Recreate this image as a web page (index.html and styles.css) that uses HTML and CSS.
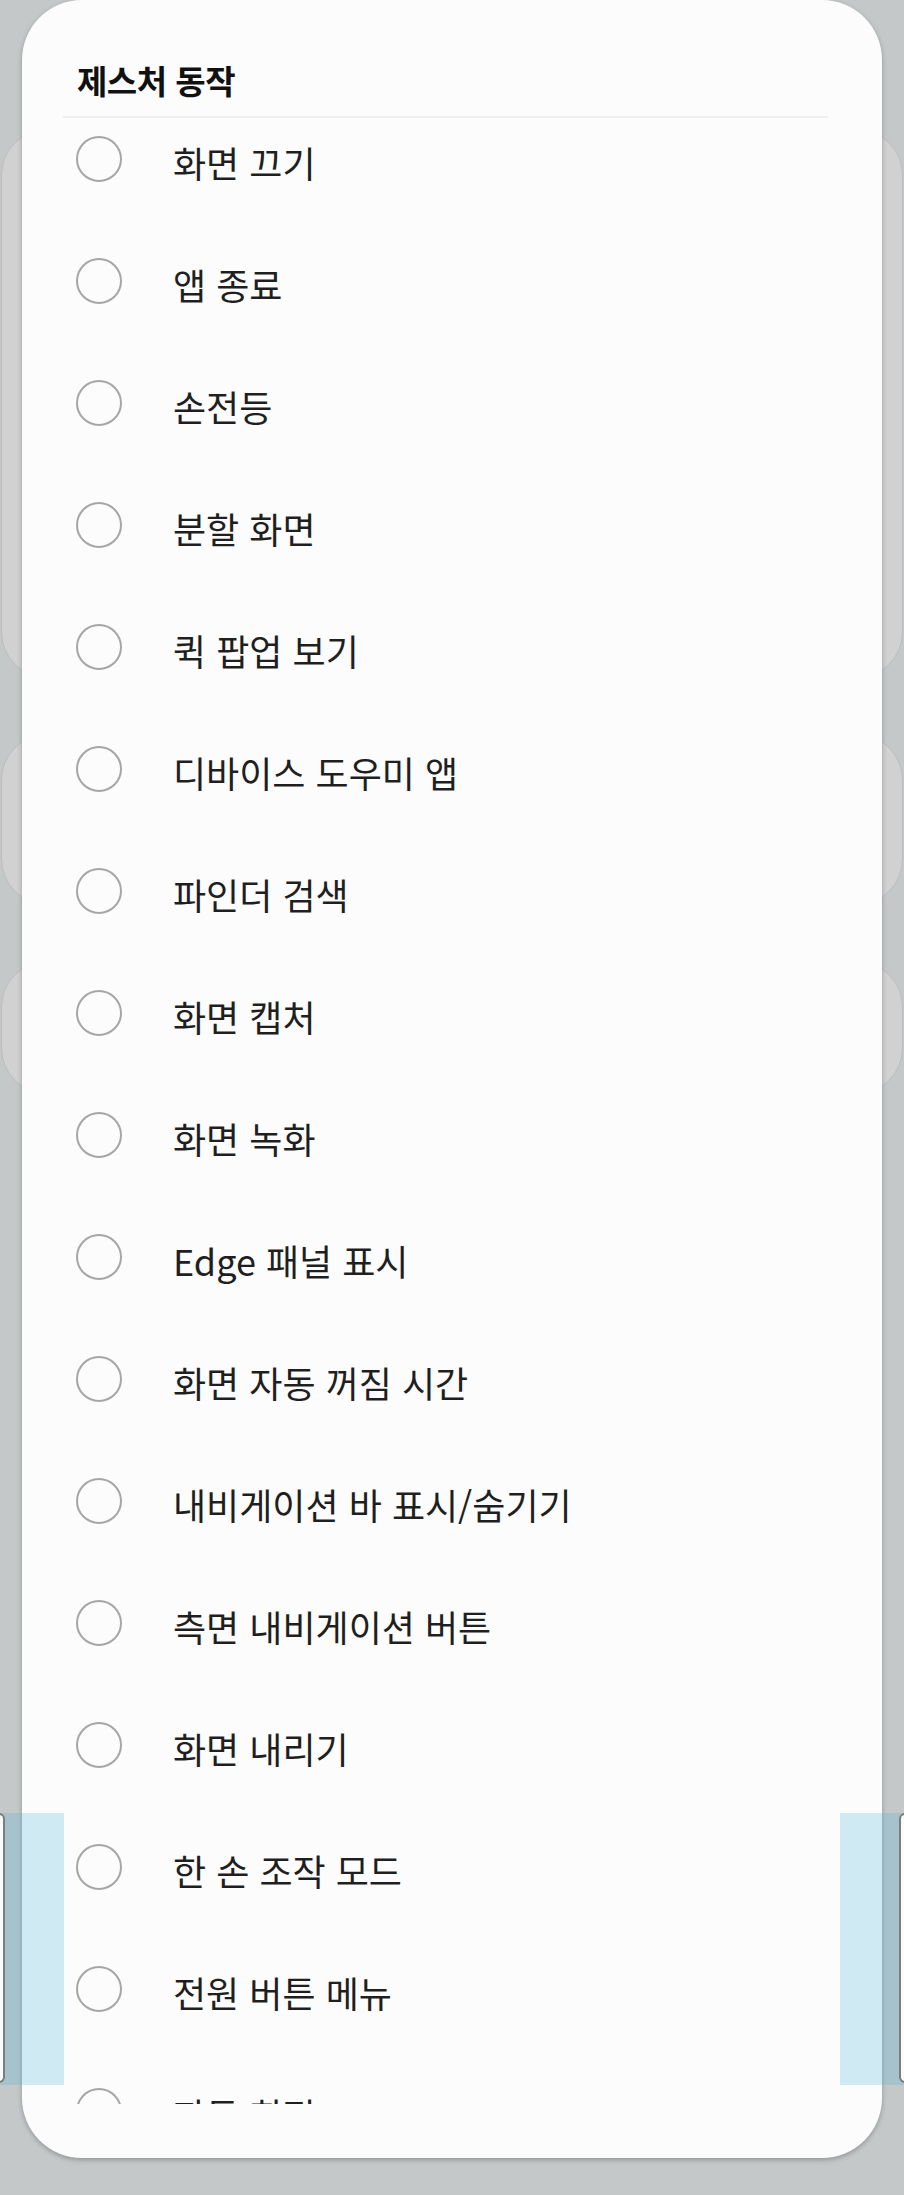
FILE: index.html
```html
<!DOCTYPE html>
<html lang="ko">
<head>
    <meta charset="UTF-8">
    <meta name="viewport" content="width=device-width, initial-scale=1.0">
    <title>제스처 동작</title>
    <link rel="stylesheet" href="styles.css">
</head>
<body>

    <div class="screen">
        <!-- dimmed settings page behind the dialog -->
        <div class="settings">
            <div class="card card-large"></div>
            <div class="card card-medium"></div>
            <div class="card card-small"></div>
        </div>

        <div class="dialog">
            <div class="dialog-header">
                <h2>제스처 동작</h2>
            </div>
            <div class="dialog-list">
                <ul class="options">
                    <li class="option"><span class="radio"></span><span class="label">화면 끄기</span></li>
                    <li class="option"><span class="radio"></span><span class="label">앱 종료</span></li>
                    <li class="option"><span class="radio"></span><span class="label">손전등</span></li>
                    <li class="option"><span class="radio"></span><span class="label">분할 화면</span></li>
                    <li class="option"><span class="radio"></span><span class="label">퀵 팝업 보기</span></li>
                    <li class="option"><span class="radio"></span><span class="label">디바이스 도우미 앱</span></li>
                    <li class="option"><span class="radio"></span><span class="label">파인더 검색</span></li>
                    <li class="option"><span class="radio"></span><span class="label">화면 캡처</span></li>
                    <li class="option"><span class="radio"></span><span class="label">화면 녹화</span></li>
                    <li class="option"><span class="radio"></span><span class="label">Edge 패널 표시</span></li>
                    <li class="option"><span class="radio"></span><span class="label">화면 자동 꺼짐 시간</span></li>
                    <li class="option"><span class="radio"></span><span class="label">내비게이션 바 표시/숨기기</span></li>
                    <li class="option"><span class="radio"></span><span class="label">측면 내비게이션 버튼</span></li>
                    <li class="option"><span class="radio"></span><span class="label">화면 내리기</span></li>
                    <li class="option"><span class="radio"></span><span class="label">한 손 조작 모드</span></li>
                    <li class="option"><span class="radio"></span><span class="label">전원 버튼 메뉴</span></li>
                    <li class="option"><span class="radio"></span><span class="label">자동 회전</span></li>
                </ul>
            </div>
        </div>

        <!-- one hand operation gesture areas -->
        <div class="gesture-zone zone-left"></div>
        <div class="gesture-zone zone-right"></div>
        <div class="edge-handle handle-left"></div>
        <div class="edge-handle handle-right"></div>
    </div>

</body>
</html>
```

FILE: styles.css
```css
body {
    margin: 0;
    padding: 0;
    background-color: #c4c8c8;
    font-family: "Noto Sans CJK KR", "Noto Sans", sans-serif;
}

.screen {
    position: relative;
    width: 904px;
    height: 2195px;
    overflow: hidden;
}

/* Settings page under the dim */
.settings {
    display: flex;
    flex-direction: column;
    gap: 56px;
    padding: 129px 1px 0;
}

.card {
    background: #d1d1d1;
    border: 1px solid #bcbcbc;
    border-radius: 46px;
}

.card-large {
    height: 547px;
}

.card-medium {
    height: 169px;
}

.card-small {
    height: 131px;
}

/* Dialog */
.dialog {
    position: absolute;
    top: 0;
    left: 22px;
    width: 860px;
    height: 2158px;
    background: #fcfcfc;
    border-radius: 60px;
    box-shadow: 0 2px 5px rgba(0, 0, 0, 0.25);
    display: flex;
    flex-direction: column;
    padding-bottom: 54px;
    box-sizing: border-box;
}

.dialog-header {
    margin: 0 54px 0 41px;
    padding: 64px 0 19px 14px;
    border-bottom: 2px solid #eeeeee;
    flex-shrink: 0;
}

.dialog-header h2 {
    margin: 0;
    font-size: 33px;
    line-height: 33px;
    font-weight: 700;
    color: #111;
    letter-spacing: -0.5px;
}

.dialog-list {
    flex-grow: 1;
    overflow: hidden;
}

.options {
    list-style: none;
    margin: -20px 0 0;
    padding: 0;
}

.option {
    display: flex;
    align-items: center;
    height: 122px;
}

.radio {
    width: 46px;
    height: 46px;
    box-sizing: border-box;
    border: 2px solid #a6a6a6;
    border-radius: 50%;
    margin-left: 54px;
    flex-shrink: 0;
}

.label {
    margin-left: 51px;
    padding-top: 5px;
    font-size: 36px;
    line-height: 36px;
    color: #1f1f1f;
}

/* Gesture zones drawn over everything */
.gesture-zone {
    position: absolute;
    top: 1813px;
    height: 272px;
    width: 64px;
    background: rgba(76, 180, 220, 0.25);
}

.zone-left {
    left: 0;
}

.zone-right {
    right: 0;
}

.edge-handle {
    position: absolute;
    top: 1813px;
    width: 7px;
    height: 270px;
    box-sizing: border-box;
    background: #fafafa;
    border: 2px solid #7d7d7d;
}

.handle-left {
    left: -2px;
    border-radius: 0 6px 6px 0;
}

.handle-right {
    right: -2px;
    border-radius: 6px 0 0 6px;
}
```
